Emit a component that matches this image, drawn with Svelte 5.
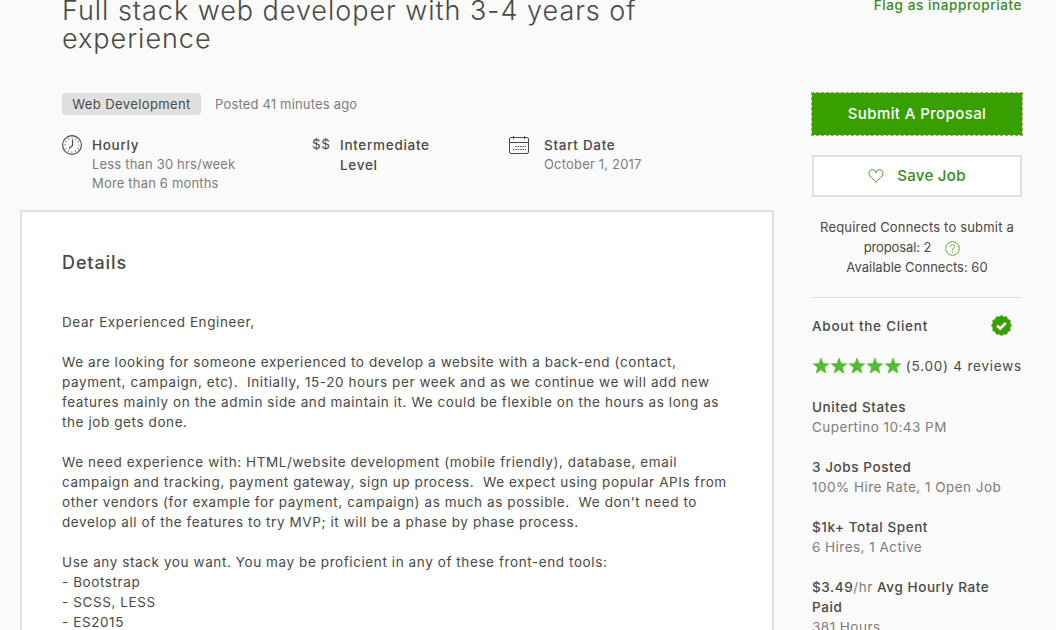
<script lang="ts">
    const stars = [0, 1, 2, 3, 4];

    const seal = Array.from({ length: 24 }, (_, i) => {
        const r = i % 2 ? 8.8 : 10.2;
        const a = (i * Math.PI) / 12;
        return `${(10.5 + r * Math.sin(a)).toFixed(2)},${(10.5 - r * Math.cos(a)).toFixed(2)}`;
    }).join(' ');

    const description = [
        ['Dear Experienced Engineer,'],
        [
            'We are looking for someone experienced to develop a website with a back-end (contact,',
            'payment, campaign, etc).  Initially, 15-20 hours per week and as we continue we will add new',
            'features mainly on the admin side and maintain it. We could be flexible on the hours as long as',
            'the job gets done.'
        ],
        [
            'We need experience with: HTML/website development (mobile friendly), database, email',
            'campaign and tracking, payment gateway, sign up process.  We expect using popular APIs from',
            "other vendors (for example for payment, campaign) as much as possible.  We don't need to",
            'develop all of the features to try MVP; it will be a phase by phase process.'
        ],
        [
            'Use any stack you want. You may be proficient in any of these front-end tools:',
            '- Bootstrap',
            '- SCSS, LESS',
            '- ES2015'
        ]
    ];

    const facts = [
        { title: 'United States', note: 'Cupertino 10:43 PM' },
        { title: '3 Jobs Posted', note: '100% Hire Rate, 1 Open Job' },
        { title: '$1k+ Total Spent', note: '6 Hires, 1 Active' }
    ];
</script>

<div class="page">
    <main class="job">
        <header class="job-head">
            <h1>Full stack web developer with 3-4 years of<br />experience</h1>
            <div class="meta">
                <span class="tag">Web Development</span>
                <span class="posted">Posted 41 minutes ago</span>
            </div>
            <div class="features">
                <div class="feature hourly">
                    <svg width="20" height="20" viewBox="0 0 20 20" fill="none" stroke="#494949">
                        <circle cx="10" cy="10" r="9.4" stroke-width="1.1" />
                        <circle cx="10" cy="10" r="7" stroke-width="1.1" stroke-dasharray="1 2.665" stroke-dashoffset=".5" />
                        <path d="M10.5 4.5v6L7 13.5" stroke-width="1.1" />
                    </svg>
                    <div>
                        <strong>Hourly</strong>
                        <p>Less than 30 hrs/week</p>
                        <p>More than 6 months</p>
                    </div>
                </div>
                <div class="feature level">
                    <span class="dollars">$$</span>
                    <div><strong>Intermediate<br />Level</strong></div>
                </div>
                <div class="feature start">
                    <svg width="20" height="20" viewBox="0 0 20 20" fill="none" stroke="#494949">
                        <rect x=".5" y="2.5" width="19" height="16" rx="1.5" />
                        <path d="M.5 7.5h19M4.5 1v3M15.5 1v3" />
                        <path d="M6 11.5h11M4 14.5h13" stroke-dasharray="1.4 1" />
                    </svg>
                    <div>
                        <strong>Start Date</strong>
                        <p>October 1, 2017</p>
                    </div>
                </div>
            </div>
        </header>

        <section class="details">
            <h2>Details</h2>
            {#each description as lines}
                <p class="para">{lines.join('\n')}</p>
            {/each}
        </section>
    </main>

    <aside class="side">
        <a class="flag" href="#flag">Flag as inappropriate</a>
        <button class="btn primary">Submit A Proposal</button>
        <button class="btn save">
            <svg width="16" height="14" viewBox="0 0 16 14" fill="none" stroke="#378a1c" stroke-width=".9">
                <path d="M8 13.4C6.5 10.8 1 8 1 4.300 1 2.100 2.500.7 4.400.7 6.300.7 7.600 1.900 8 3.800 8.400 1.900 9.700.7 11.600.7 13.500.7 15 2.100 15 4.300 15 8 9.500 10.800 8 13.400z" />
            </svg>
            <span>Save Job</span>
        </button>
        <div class="connects">
            <div>Required Connects to submit a</div>
            <div class="proposal">
                <span>proposal: 2</span>
                <svg width="15" height="15" viewBox="0 0 15 15" fill="none" stroke="#4aa12d">
                    <circle cx="7.5" cy="7.5" r="6.8" stroke-width=".9" />
                    <path d="M5.3 5.6c0-1.3.9-2.1 2.2-2.1s2.2.8 2.2 2c0 1.500-2.200 1.800-2.200 3.500M7.500 10.200v1.300" stroke-width=".9" />
                </svg>
            </div>
            <div class="avail">Available Connects: 60</div>
        </div>
        <div class="client">
            <div class="client-head">
                <span>About the Client</span>
                <svg width="21" height="21" viewBox="0 0 21 21">
                    <polygon points={seal} fill="#37a000" stroke="#37a000" stroke-linejoin="round" stroke-width=".6" />
                    <path d="M6.2 10.6l3 3 5.6-5.8" fill="none" stroke="#fff" stroke-width="2.6" />
                </svg>
            </div>
            <div class="rating">
                <span class="stars">
                    {#each stars as s (s)}
                        <svg width="18" height="18" viewBox="0 0 18 18">
                            <path fill="#52bc32" d="M9 .3l2.3 5.900 6.300.3-4.900 4 1.700 6.200L9 13.300l-5.400 3.400 1.700-6.200-4.900-4 6.300-.3z" />
                        </svg>
                    {/each}
                </span>
                <span>(5.00) 4 reviews</span>
            </div>
            {#each facts as fact}
                <div class="fact">
                    <strong>{fact.title}</strong>
                    <p>{fact.note}</p>
                </div>
            {/each}
            <div class="fact">
                <strong>$3.49<span class="unit">/hr</span> Avg Hourly Rate<br />Paid</strong>
                <p>381 Hours</p>
            </div>
        </div>
    </aside>
</div>

<style>
    :global(body) {
        background: #fafafa;
        overflow: hidden;
    }
    .page {
        display: flex;
        gap: 38px;
        height: 633px;
        margin-top: -3px;
        padding-left: 20px;
        box-sizing: border-box;
        overflow: hidden;
        color: #494949;
        font: 13.5px/20px Inter, "Liberation Sans", sans-serif;
        letter-spacing: 0.59px;
    }
    h1, h2, p { margin: 0; }
    strong { display: block; font-weight: 500; letter-spacing: 0.58px; }
    .job { width: 754px; }
    .job-head { height: 213px; padding-left: 42px; box-sizing: border-box; }
    h1 {
        font-size: 27px; line-height: 28px;
        font-weight: 300;
        letter-spacing: 0.97px;
        white-space: nowrap;
    }
    .meta { display: flex; align-items: center; gap: 14px; margin-top: 40px; }
    .tag {
        width: 139px; height: 22px;
        font-size: 13px; line-height: 22px;
        letter-spacing: 0.4px;
        text-align: center;
        border-radius: 4px;
        background: #e0e0e0;
    }
    .posted, .feature p {
        color: #7d7d7d;
        font-size: 13px;
        letter-spacing: 0.18px;
    }
    .features { display: flex; margin-top: 20px; white-space: nowrap; }
    .feature { display: flex; gap: 10px; }
    .feature p { line-height: 19px; }
    .feature strong { letter-spacing: 0.7px; }
    .hourly { width: 250px; }
    .level { width: 197px; }
    .start { gap: 15px; }
    .dollars { width: 18px; line-height: 19px; }
    .details {
        height: 440px;
        padding: 41px 40px 0;
        box-sizing: border-box;
        border: 2px solid #e0e0e0;
        background: #fff;
    }
    h2 {
        margin-bottom: 39px;
        font-size: 18px; line-height: 20px;
        font-weight: 500;
        letter-spacing: 0.9px;
    }
    .para { margin-bottom: 20px; white-space: pre; }
    .side { width: 210px; white-space: nowrap; }
    .flag {
        display: block;
        line-height: 17px;
        text-align: right;
        color: #378a1c;
        text-decoration: none;
        font-weight: 500;
        letter-spacing: 0.6px;
    }
    .btn {
        display: flex; justify-content: center; align-items: center;
        width: 210px; height: 42px;
        box-sizing: border-box;
        border: 0;
        font: 500 15px/20px Inter, "Liberation Sans", sans-serif;
        letter-spacing: 0.4px;
        cursor: pointer;
    }
    .primary { margin-top: 79px; background: #37a000; color: #fff; outline: 1px dashed #a5a84a; }
    .save {
        gap: 13px;
        margin-top: 20px;
        border: 2px solid #e0e0e0;
        background: #fff;
        color: #378a1c;
        letter-spacing: 0.3px;
    }
    .connects {
        margin-top: 20px; padding-bottom: 20px;
        border-bottom: 1px solid #e0e0e0;
        font-size: 13px;
        letter-spacing: 0.18px;
        text-align: center;
    }
    .avail { letter-spacing: 0.02px; }
    .proposal {
        display: flex; justify-content: center; align-items: center;
        gap: 14px;
        padding-right: 10px;
        letter-spacing: -0.1px;
    }
    .proposal svg { margin-top: 2px; }
    .client-head {
        display: flex; justify-content: space-between; align-items: center;
        margin-top: 17px; padding-right: 10px;
        font-weight: 500;
        letter-spacing: 0.75px;
    }
    .rating { display: flex; align-items: center; justify-content: space-between; height: 20px; margin: 20px 0 21px; }
    .stars { display: flex; }
    .rating span:last-child { letter-spacing: 0.78px; }
    .fact { margin-bottom: 20px; }
    .fact p { letter-spacing: 0.47px; }
    .fact p, .unit { color: #7d7d7d; }
    .unit { font-weight: 400; }
</style>
